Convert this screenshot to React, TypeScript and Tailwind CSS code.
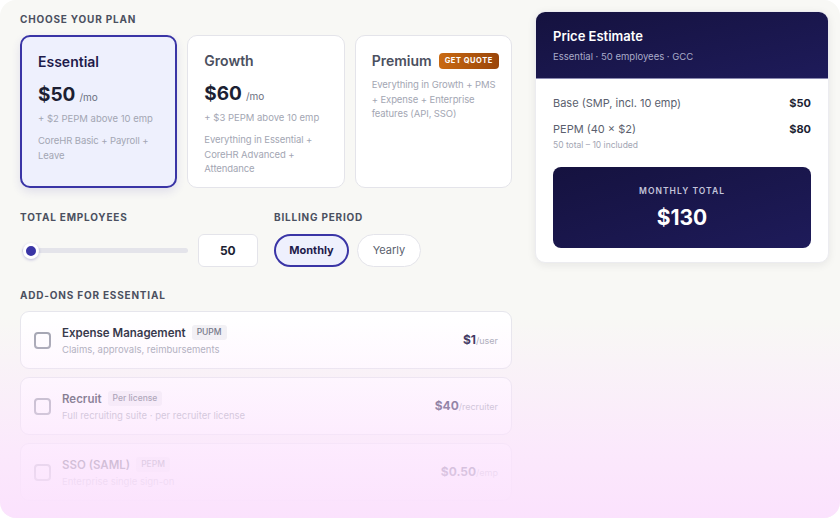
import { useState } from 'react'

const plans = [
  {
    name: 'Essential',
    price: '$50',
    extra: '+ $2 PEPM above 10 emp',
    desc: 'CoreHR Basic + Payroll + Leave',
  },
  {
    name: 'Growth',
    price: '$60',
    extra: '+ $3 PEPM above 10 emp',
    desc: 'Everything in Essential + CoreHR Advanced + Attendance',
  },
  {
    name: 'Premium',
    price: null,
    extra: null,
    desc: 'Everything in Growth + PMS + Expense + Enterprise features (API, SSO)',
  },
]

const addons = [
  { name: 'Expense Management', tag: 'PUPM', desc: 'Claims, approvals, reimbursements', price: '$1', unit: '/user' },
  { name: 'Recruit', tag: 'Per license', desc: 'Full recruiting suite · per recruiter license', price: '$40', unit: '/recruiter' },
  { name: 'SSO (SAML)', tag: 'PEPM', desc: 'Enterprise single sign-on', price: '$0.50', unit: '/emp' },
]

const Label = ({ children }: { children: string }) => (
  <div className="text-[10px] font-bold uppercase tracking-[0.08em] text-[#4b5060] leading-none">{children}</div>
)

const App = () => {
  const [plan, setPlan] = useState('Essential')
  const [billing, setBilling] = useState('Monthly')

  return (
    <div className="w-[840px] h-[518px] bg-white" style={{ fontFamily: 'Inter, "Noto Sans", sans-serif' }}>
      <div className="relative w-full h-full rounded-[16px] overflow-hidden bg-[#f8f8f5] flex gap-[23px] pl-5 pr-[11px] pt-[11px]">
        {/* Left column */}
        <div className="w-[492px] shrink-0 pt-[3px]">
          <Label>Choose your plan</Label>
          <div className="mt-[11px] grid grid-cols-3 gap-[10px]">
            {plans.map((p) => {
              const active = plan === p.name
              return (
                <div
                  key={p.name}
                  onClick={() => setPlan(p.name)}
                  className={`h-[153px] cursor-pointer rounded-[10px] ${
                    active
                      ? 'border-2 border-[#3a35a6] bg-[#eef0fd] shadow-[0_4px_10px_rgba(55,48,163,0.12)] pl-4 pr-3 pt-[15px]'
                      : 'border border-[#e4e4ea] bg-white pl-[16px] pr-[8px] pt-[15px]'
                  }`}
                >
                  <div className="flex items-center gap-[7px] h-5">
                    <span className={`text-[14px] font-semibold leading-5 ${active ? 'text-[#1e1b4b]' : 'text-[#4b5060]'}`}>
                      {p.name}
                    </span>
                    {p.name === 'Premium' && (
                      <span className="whitespace-nowrap rounded-[4px] bg-gradient-to-r from-[#c96a12] to-[#9a4509] px-[6px] py-[4px] text-[7.5px] font-bold tracking-[0.07em] text-white leading-none">
                        GET QUOTE
                      </span>
                    )}
                  </div>
                  {p.price && (
                    <div className="mt-[11px] flex items-baseline gap-1">
                      <span className="text-[19px] font-bold text-[#1c1f33] leading-6">{p.price}</span>
                      <span className="text-[10px] text-[#6b7080]">/mo</span>
                    </div>
                  )}
                  {p.extra && <div className="mt-[5px] text-[9.5px] text-[#a3a6b3] leading-[14px]">{p.extra}</div>}
                  <div
                    className={`${p.price ? 'mt-[8px]' : 'mt-[7px]'} text-[9.5px] tracking-[-0.01em] text-[#a3a6b3] leading-[14.5px]`}
                  >
                    {p.desc}
                  </div>
                </div>
              )
            })}
          </div>

          {/* Employees + billing */}
          <div className="mt-[24px] flex gap-[16px]">
            <div className="w-[238px]">
              <Label>Total employees</Label>
              <div className="mt-[12px] flex items-center gap-[10px]">
                <div className="relative w-[167px] h-[5px] ml-[2px] rounded-full bg-[#e4e4ea]">
                  <span className="absolute left-[1px] top-1/2 -translate-y-1/2 w-[16px] h-[16px] rounded-full bg-[#3a35a6] border-[3px] border-white shadow-[0_1px_3px_rgba(55,48,163,0.3)]" />
                </div>
                <div className="w-[61px] h-[33px] rounded-[6px] border border-[#e4e4ea] bg-white flex items-center justify-center text-[12px] font-bold text-[#1c1f33]">
                  50
                </div>
              </div>
            </div>
            <div>
              <Label>Billing period</Label>
              <div className="mt-[12px] flex gap-[8px]">
                {['Monthly', 'Yearly'].map((b) => (
                  <button
                    key={b}
                    onClick={() => setBilling(b)}
                    className={`h-[33px] rounded-full text-[11px] leading-none ${
                      billing === b
                        ? 'w-[75px] border-2 border-[#3a35a6] bg-[#eef0fd] font-bold text-[#1e1b4b]'
                        : 'w-[64px] border border-[#e4e4ea] bg-white text-[#5b5f6e]'
                    }`}
                  >
                    {b}
                  </button>
                ))}
              </div>
            </div>
          </div>

          {/* Add-ons */}
          <div className="mt-[23px]">
            <Label>Add-ons for Essential</Label>
            <div className="mt-[11px] flex flex-col gap-[8px]">
              {addons.map((a) => (
                <div
                  key={a.name}
                  className="h-[58px] rounded-[9px] border border-[#e6e6ec] bg-white flex items-center pl-[13px] pr-[13px]"
                >
                  <span className="w-[17px] h-[17px] rounded-[4px] border-2 border-[#9ea1ad] bg-white shrink-0" />
                  <div className="ml-[11px] flex-1">
                    <div className="flex items-center gap-[6px]">
                      <span className="text-[11.5px] font-semibold text-[#262a3b] leading-4">{a.name}</span>
                      <span className="rounded-[3px] bg-[#f1f1f4] px-[5px] py-[3px] text-[8.5px] font-medium text-[#6b7080] leading-none">
                        {a.tag}
                      </span>
                    </div>
                    <div className="mt-[3px] text-[9.5px] text-[#a3a6b3] leading-3">{a.desc}</div>
                  </div>
                  <div className="flex items-baseline">
                    <span className="text-[12px] font-bold text-[#2a2550]">{a.price}</span>
                    <span className="text-[9px] text-[#a3a6b3]">{a.unit}</span>
                  </div>
                </div>
              ))}
            </div>
          </div>
        </div>

        {/* Right column: estimate */}
        <div className="w-[294px] shrink-0">
          <div className="rounded-[10px] bg-white overflow-hidden shadow-[0_2px_8px_rgba(20,20,40,0.08)] border border-[#ececf0]">
            <div className="bg-gradient-to-br from-[#15123f] to-[#1e1b5a] px-[17px] pt-[16px] pb-[15px] border-b border-[#8a89b0]">
              <div className="text-[13px] font-semibold text-white leading-4">Price Estimate</div>
              <div className="mt-[7px] text-[9.5px] text-[#a9abc9] leading-3">Essential · 50 employees · GCC</div>
            </div>
            <div className="px-[17px] pt-[16px] pb-[14px]">
              <div className="flex justify-between items-center text-[11px] leading-4">
                <span className="text-[#5b5f6e]">Base (SMP, incl. 10 emp)</span>
                <span className="font-bold text-[#1c1f33]">$50</span>
              </div>
              <div className="mt-[10px] flex justify-between items-center text-[11px] leading-4">
                <span className="text-[#5b5f6e]">PEPM (40 × $2)</span>
                <span className="font-bold text-[#1c1f33]">$80</span>
              </div>
              <div className="mt-[2px] text-[8.5px] text-[#a3a6b3] leading-3">50 total – 10 included</div>
              <div className="mt-[16px] h-[81px] rounded-[8px] bg-gradient-to-br from-[#15123f] to-[#1e1b5a] flex flex-col items-center justify-center">
                <div className="text-[8.5px] font-semibold tracking-[0.12em] text-[#c4c5db] leading-3">MONTHLY TOTAL</div>
                <div className="mt-[9px] text-[21px] font-bold text-white leading-6">$130</div>
              </div>
            </div>
          </div>
        </div>

        {/* Bottom fade */}
        <div className="pointer-events-none absolute inset-x-0 bottom-0 h-[200px] bg-gradient-to-b from-[#fce4fe]/0 via-[#fce4fe]/75 via-65% to-[#fbe2fd]" />
      </div>
    </div>
  )
}

export default App
